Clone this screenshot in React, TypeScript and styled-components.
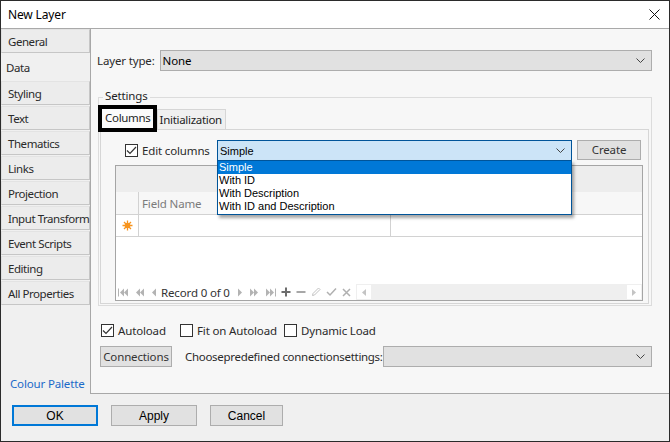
import React from 'react';
import styled, { createGlobalStyle } from 'styled-components';

const GlobalStyle = createGlobalStyle`
  body {
    margin: 0;
    font-family: 'Noto Sans', 'Open Sans', sans-serif;
    font-size: 11.5px;
    letter-spacing: -0.15px;
    color: #1e1e1e;
  }
`;

const classic = `'Liberation Sans', Arial, sans-serif`;

const Window = styled.div`
    width: 670px;
    height: 442px;
    box-sizing: border-box;
    border: 1px solid #2b2b2b;
    background: #f0f0f0;
    display: flex;
    flex-direction: column;
    overflow: hidden;
  `,
  TitleBar = styled.div`
    height: 27px;
    flex: none;
    background: #fff;
    border-bottom: 1px solid #a9a9a9;
    display: flex;
    align-items: center;
    justify-content: space-between;
    padding: 0 9px 0 7px;
    font-size: 12px;
    color: #000;
  `,
  Body = styled.div`
    height: 365px;
    flex: none;
    display: flex;
  `,
  Sidebar = styled.div`
    width: 89px;
    flex: none;
    display: flex;
    flex-direction: column;
    background: #f0f0f0;
  `,
  SideTab = styled.div<{ active?: boolean }>`
    height: ${(p) => (p.active ? '26px' : '24px')};
    box-sizing: border-box;
    display: flex;
    align-items: center;
    padding-left: ${(p) => (p.active ? '5px' : '6px')};
    background: ${(p) => (p.active ? '#f0f0f0' : '#ececec')};
    border: ${(p) => (p.active ? 'none' : '1px solid #c6c6c6')};
    border-left-color: #e0e0e0;
    border-top-color: #e3e3e3;
    color: #2a2a2a;
    letter-spacing: -0.45px;
    white-space: nowrap;
    & + & {
      margin-top: 1px;
    }
  `,
  SideLink = styled.div`
    margin-top: auto;
    margin-bottom: 3px;
    padding-left: 9px;
    color: #1b6ac9;
  `,
  Content = styled.div`
    flex: 1;
    background: #f7f7f7;
    border-left: 1px solid #a8a8a8;
    border-bottom: 1px solid #a8a8a8;
    display: flex;
    flex-direction: column;
    padding: 21px 17px 0 6px;
  `,
  FieldRow = styled.div`
    display: flex;
    align-items: center;
    height: 21px;
    gap: 5px;
  `,
  Label = styled.span`
    color: #2a2a2a;
    white-space: nowrap;
  `,
  ConnLabel = styled(Label)`
    margin-left: 13px;
    letter-spacing: -0.3px;
  `,
  Combo = styled.div<{ focused?: boolean; w?: number }>`
    position: relative;
    box-sizing: border-box;
    height: 21px;
    ${(p) => (p.w ? `width: ${p.w}px; flex: none;` : 'flex: 1;')}
    background: ${(p) => (p.focused ? '#cce4f7' : '#e1e1e1')};
    border: 1px solid ${(p) => (p.focused ? '#005499' : '#adadad')};
    display: flex;
    align-items: center;
    padding: 0 0 0 2px;
    color: #000;
    ${(p) => (p.focused ? `font-family: ${classic}; font-size: 11px; letter-spacing: 0;` : '')}
  `,
  ComboText = styled.span`
    flex: 1;
    white-space: nowrap;
  `,
  Chevron = styled.svg`
    width: 9px;
    height: 5px;
    margin-right: 6px;
    fill: none;
    stroke: #444;
    stroke-width: 1;
  `,
  Group = styled.div`
    position: relative;
    margin: 26px 0 0 1px;
    height: 209px;
    box-sizing: border-box;
    border: 1px solid #dcdcdc;
    padding: 7px 2px 1px 1px;
    display: flex;
    flex-direction: column;
  `,
  Legend = styled.span`
    position: absolute;
    top: -10px;
    left: 4px;
    padding: 0 2px;
    background: #f7f7f7;
    color: #1e1e1e;
  `,
  TabStrip = styled.div`
    height: 24px;
    display: flex;
    align-items: flex-end;
    position: relative;
    z-index: 1;
  `,
  PageTab = styled.div<{ active?: boolean }>`
    box-sizing: border-box;
    display: flex;
    align-items: center;
    white-space: nowrap;
    letter-spacing: -0.3px;
    ${(p) =>
      p.active
        ? `
      height: 27px;
      margin-bottom: -3px;
      border: 4px solid #000;
      background: #fbfbfb;
      padding: 0 2px 3px 3px;
      margin-left: -2px;
    `
        : `
      height: 20px;
      border: 1px solid #d6d6d6;
      border-bottom: none;
      background: #f0f0f0;
      padding: 0 3px 0 2px;
    `}
  `,
  TabPage = styled.div`
    flex: 1;
    border: 1px solid #d6d6d6;
    display: flex;
    flex-direction: column;
    padding: 10px 5px 2px 14px;
  `,
  EditRow = styled.div`
    display: flex;
    align-items: center;
    height: 21px;
    padding-left: 10px;
  `,
  CheckWrap = styled.label<{ w?: number }>`
    display: flex;
    align-items: center;
    gap: 4px;
    ${(p) => (p.w ? `width: ${p.w}px; flex: none;` : '')}
    color: #2a2a2a;
    white-space: nowrap;
  `,
  Box = styled.span`
    width: 13px;
    height: 13px;
    box-sizing: border-box;
    border: 1px solid #333;
    background: #fff;
    display: flex;
    align-items: center;
    justify-content: center;
    flex: none;
  `,
  Button = styled.div<{ primary?: boolean; w: number; h?: number; classicFont?: boolean }>`
    box-sizing: border-box;
    width: ${(p) => p.w}px;
    height: ${(p) => p.h ?? 21}px;
    flex: none;
    display: flex;
    align-items: center;
    justify-content: center;
    background: #e1e1e1;
    border: ${(p) => (p.primary ? '2px solid #0078d7' : '1px solid #adadad')};
    color: ${(p) => (p.classicFont ? '#000' : '#333')};
    ${(p) => (p.classicFont ? `font-family: ${classic}; font-size: 12px; letter-spacing: 0;` : '')}
  `,
  CreateButton = styled(Button)`
    margin: -2px 0 0 5px;
  `,
  DropList = styled.div`
    position: absolute;
    top: 19px;
    left: -1px;
    right: -1px;
    z-index: 5;
    background: #fff;
    border: 1px solid #005499;
    box-shadow: 2px 3px 3px rgba(0, 0, 0, 0.35);
    padding: 0 0 1px;
  `,
  DropItem = styled.div<{ selected?: boolean }>`
    height: 13px;
    line-height: 13px;
    padding-left: 1px;
    background: ${(p) => (p.selected ? '#0078d7' : 'transparent')};
    color: ${(p) => (p.selected ? '#fff' : '#000')};
    white-space: nowrap;
  `,
  Grid = styled.div`
    margin-top: 4px;
    flex: 1;
    border: 1px solid #a5a5a5;
    background: #fff;
    display: flex;
    flex-direction: column;
  `,
  GroupPanel = styled.div`
    height: 26px;
    flex: none;
    background: #ededed;
  `,
  GridRow = styled.div<{ header?: boolean }>`
    height: ${(p) => (p.header ? '22px' : '21px')};
    flex: none;
    display: flex;
    background: ${(p) => (p.header ? '#f7f7f7' : '#fff')};
    border-bottom: 1px solid #d2d2d2;
  `,
  Cell = styled.div<{ w?: number }>`
    box-sizing: border-box;
    ${(p) => (p.w ? `width: ${p.w}px; flex: none;` : 'flex: 1;')}
    border-right: 1px solid #d2d2d2;
    display: flex;
    align-items: center;
    padding-left: 3px;
    color: #7b7b7b;
    &:last-child {
      border-right: none;
    }
  `,
  IndicatorCell = styled(Cell)`
    justify-content: center;
    padding-left: 0;
  `,
  GridFill = styled.div`
    flex: 1;
  `,
  NavBar = styled.div`
    height: 16px;
    flex: none;
    display: flex;
    align-items: center;
    padding-left: 2px;
  `,
  NavGroup = styled.div<{ gap: number }>`
    display: flex;
    align-items: center;
    gap: ${(p) => p.gap}px;
    margin-right: 5px;
  `,
  NavIcon = styled.svg`
    flex: none;
    height: 9px;
    fill: #b3b3b3;
  `,
  NavText = styled.span`
    margin: 0 8px 0 0;
    color: #333;
    white-space: nowrap;
  `,
  ScrollBar = styled.div`
    flex: 1;
    height: 16px;
    background: #efefef;
    display: flex;
    justify-content: space-between;
    padding: 1px;
    box-sizing: border-box;
  `,
  ScrollArrow = styled.div`
    width: 14px;
    height: 14px;
    background: #fff;
    display: flex;
    align-items: center;
    justify-content: center;
  `,
  OptionsRow = styled.div`
    display: flex;
    align-items: center;
    height: 16px;
    margin: 16px 0 0 4px;
  `,
  ConnRow = styled.div`
    display: flex;
    align-items: center;
    height: 21px;
    margin: 8px 0 0 3px;
  `,
  Footer = styled.div`
    flex: 1;
    display: flex;
    gap: 13px;
    padding: 11px 0 0 11px;
  `;

const Check = ({ checked }: { checked?: boolean }) => (
  <Box>
    {checked && (
      <svg width="11" height="9" viewBox="0 0 11 9">
        <polyline points="1,4.5 4,7.5 10,1" fill="none" stroke="#333" strokeWidth="1.2" />
      </svg>
    )}
  </Box>
);

const Down = () => (
  <Chevron viewBox="0 0 9 5">
    <polyline points="0.5,0.5 4.5,4.5 8.5,0.5" />
  </Chevron>
);

const sideTabs = [
  'General',
  'Data',
  'Styling',
  'Text',
  'Thematics',
  'Links',
  'Projection',
  'Input Transform',
  'Event Scripts',
  'Editing',
  'All Properties',
];

const Tri = ({ dir, bar, double }: { dir: 'l' | 'r'; bar?: boolean; double?: boolean }) => {
  const w = (double ? 8 : 4) + (bar ? 2 : 0);
  const tri = (x: number) =>
    dir === 'l' ? `${x + 4},0.5 ${x},4.5 ${x + 4},8.5` : `${x},0.5 ${x + 4},4.5 ${x},8.5`;
  const x0 = bar && dir === 'l' ? 2 : 0;
  return (
    <NavIcon width={w} viewBox={`0 0 ${w} 9`}>
      {bar && <rect x={dir === 'l' ? 0 : w - 1} y="0.5" width="1" height="8" />}
      <polygon points={tri(x0)} />
      {double && <polygon points={tri(x0 + 4)} />}
    </NavIcon>
  );
};

export default function App() {
  return (
    <>
      <GlobalStyle />
      <Window>
        <TitleBar>
          <span>New Layer</span>
          <svg width="11" height="11" viewBox="0 0 11 11">
            <path d="M0.5 0.5 L10.5 10.5 M10.5 0.5 L0.5 10.5" stroke="#111" strokeWidth="1" />
          </svg>
        </TitleBar>
        <Body>
          <Sidebar>
            {sideTabs.map((t) => (
              <SideTab key={t} active={t === 'Data'}>
                {t}
              </SideTab>
            ))}
            <SideLink>Colour Palette</SideLink>
          </Sidebar>
          <Content>
            <FieldRow>
              <Label>Layer type:</Label>
              <Combo>
                <ComboText>None</ComboText>
                <Down />
              </Combo>
            </FieldRow>

            <Group>
              <Legend>Settings</Legend>
              <TabStrip>
                <PageTab active>Columns</PageTab>
                <PageTab>Initialization</PageTab>
              </TabStrip>
              <TabPage>
                <EditRow>
                  <CheckWrap w={92}>
                    <Check checked />
                    Edit columns
                  </CheckWrap>
                  <Combo focused w={355}>
                    <ComboText>Simple</ComboText>
                    <Down />
                    <DropList>
                      <DropItem selected>Simple</DropItem>
                      <DropItem>With ID</DropItem>
                      <DropItem>With Description</DropItem>
                      <DropItem>With ID and Description</DropItem>
                    </DropList>
                  </Combo>
                  <CreateButton w={64} h={20}>
                    Create
                  </CreateButton>
                </EditRow>
                <Grid>
                  <GroupPanel />
                  <GridRow header>
                    <IndicatorCell w={23} />
                    <Cell w={252}>Field Name</Cell>
                    <Cell />
                  </GridRow>
                  <GridRow>
                    <IndicatorCell w={23}>
                      <svg width="11" height="11" viewBox="0 0 11 11">
                        <path
                          d="M5.5 0.5 V10.5 M0.5 5.5 H10.5 M2 2 L9 9 M9 2 L2 9"
                          stroke="#f7941d"
                          strokeWidth="1.3"
                        />
                        <circle cx="5.5" cy="5.5" r="2.8" fill="#f7941d" />
                      </svg>
                    </IndicatorCell>
                    <Cell w={252} />
                    <Cell />
                  </GridRow>
                  <GridFill />
                  <NavBar>
                    <NavGroup gap={8}>
                      <Tri dir="l" bar double />
                      <Tri dir="l" double />
                      <Tri dir="l" />
                    </NavGroup>
                    <NavText>Record 0 of 0</NavText>
                    <NavGroup gap={8}>
                      <Tri dir="r" />
                      <Tri dir="r" double />
                      <Tri dir="r" double bar />
                    </NavGroup>
                    <NavGroup gap={5}>
                      <svg width="10" height="10" viewBox="0 0 10 10">
                        <path d="M5 0.5 V9.5 M0.5 5 H9.5" stroke="#6d6d6d" strokeWidth="2" />
                      </svg>
                      <svg width="10" height="10" viewBox="0 0 10 10">
                        <path d="M0.5 5 H9.5" stroke="#8a8a8a" strokeWidth="1.5" />
                      </svg>
                      <svg width="10" height="10" viewBox="0 0 10 10">
                        <path d="M1.5 8.5 L2 6.5 L7.5 1 L9 2.5 L3.5 8 Z" fill="none" stroke="#c2c2c2" strokeWidth="1" />
                      </svg>
                      <svg width="11" height="10" viewBox="0 0 11 10">
                        <polyline points="1,5 4,8 10,1.5" fill="none" stroke="#b0b0b0" strokeWidth="1.5" />
                      </svg>
                      <svg width="9" height="9" viewBox="0 0 9 9">
                        <path d="M1 1 L8 8 M8 1 L1 8" stroke="#b0b0b0" strokeWidth="1.5" />
                      </svg>
                    </NavGroup>
                    <ScrollBar>
                      <ScrollArrow>
                        <svg width="4" height="7" viewBox="0 0 4 7">
                          <polygon points="4,0 0,3.5 4,7" fill="#c4c4c4" />
                        </svg>
                      </ScrollArrow>
                      <ScrollArrow>
                        <svg width="4" height="7" viewBox="0 0 4 7">
                          <polygon points="0,0 4,3.5 0,7" fill="#c4c4c4" />
                        </svg>
                      </ScrollArrow>
                    </ScrollBar>
                  </NavBar>
                </Grid>
              </TabPage>
            </Group>

            <OptionsRow>
              <CheckWrap w={79}>
                <Check checked />
                Autoload
              </CheckWrap>
              <CheckWrap w={104}>
                <Check />
                Fit on Autoload
              </CheckWrap>
              <CheckWrap>
                <Check />
                Dynamic Load
              </CheckWrap>
            </OptionsRow>

            <ConnRow>
              <Button w={72}>Connections</Button>
              <ConnLabel>Choosepredefined connectionsettings:</ConnLabel>
              <Combo>
                <ComboText />
                <Down />
              </Combo>
            </ConnRow>
          </Content>
        </Body>
        <Footer>
          <Button primary classicFont w={86}>
            OK
          </Button>
          <Button classicFont w={86}>
            Apply
          </Button>
          <Button classicFont w={73}>
            Cancel
          </Button>
        </Footer>
      </Window>
    </>
  );
}
